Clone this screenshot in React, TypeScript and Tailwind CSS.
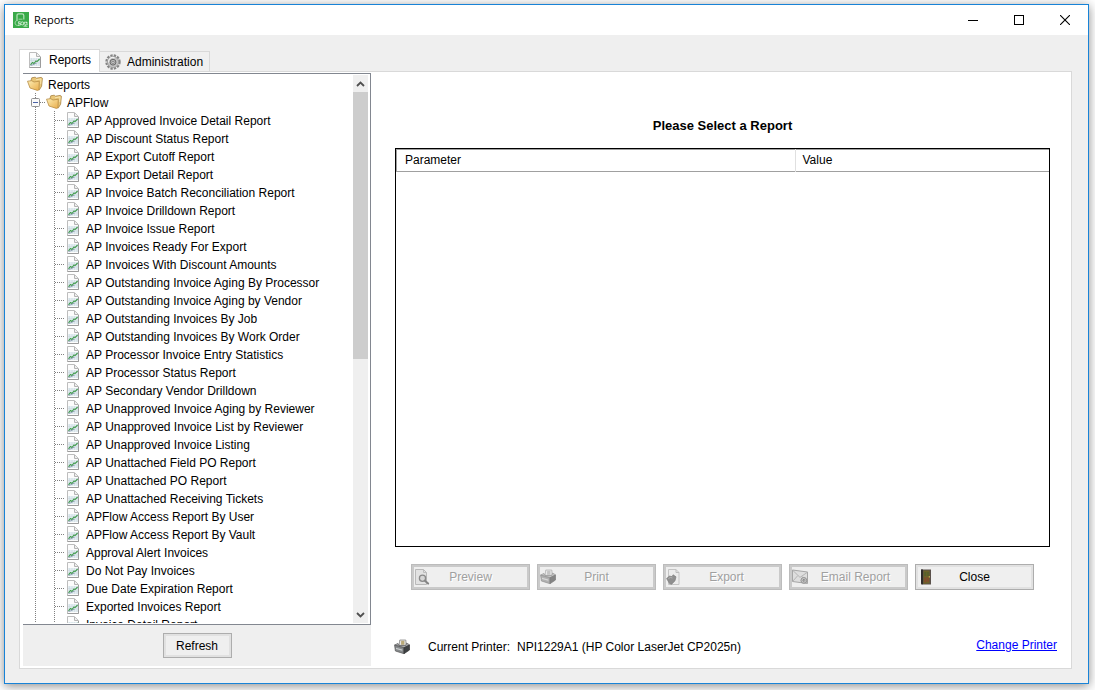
import React, { useRef, useState } from 'react';
import clsx from 'clsx';

const REPORTS = [
  'AP Approved Invoice Detail Report',
  'AP Discount Status Report',
  'AP Export Cutoff Report',
  'AP Export Detail Report',
  'AP Invoice Batch Reconciliation Report',
  'AP Invoice Drilldown Report',
  'AP Invoice Issue Report',
  'AP Invoices Ready For Export',
  'AP Invoices With Discount Amounts',
  'AP Outstanding Invoice Aging By Processor',
  'AP Outstanding Invoice Aging by Vendor',
  'AP Outstanding Invoices By Job',
  'AP Outstanding Invoices By Work Order',
  'AP Processor Invoice Entry Statistics',
  'AP Processor Status Report',
  'AP Secondary Vendor Drilldown',
  'AP Unapproved Invoice Aging by Reviewer',
  'AP Unapproved Invoice List by Reviewer',
  'AP Unapproved Invoice Listing',
  'AP Unattached Field PO Report',
  'AP Unattached PO Report',
  'AP Unattached Receiving Tickets',
  'APFlow Access Report By User',
  'APFlow Access Report By Vault',
  'Approval Alert Invoices',
  'Do Not Pay Invoices',
  'Due Date Expiration Report',
  'Exported Invoices Report',
  'Invoice Detail Report',
];

// Dotted guide lines of the tree
const V_DOTS = 'bg-[repeating-linear-gradient(to_bottom,#808080_0_1px,transparent_1px_2px)]';
const H_DOTS = 'bg-[repeating-linear-gradient(to_right,#808080_0_1px,transparent_1px_2px)]';

const AppIcon = () => (
  <svg width="16" height="16" viewBox="0 0 16 16" className="shrink-0" fill="none">
    <rect width="16" height="16" fill="#3aaa49" />
    <path d="M4 9V3.5Q4 1.8 5.7 1.8H9Q10.8 1.8 10.8 3.5V7.5" stroke="#b7e3bb" strokeWidth="1.2" />
    <path d="M4 8.5Q2 8.8 2 11T4.2 13.4H6M5.5 7.2h4" stroke="#9bd7a1" strokeWidth="1" />
    <path d="M7.6 9.8H5.4v1.6h2v1.7H5" stroke="#d6f0d8" strokeWidth=".9" />
    <circle cx="9.3" cy="11.4" r="1.5" stroke="#d6f0d8" strokeWidth=".9" />
    <circle cx="12.6" cy="11.6" r="1.5" stroke="#d6f0d8" strokeWidth="1.4" strokeDasharray="1.2 .5" />
    <path d="M10.5 14.2h4" stroke="#b7e3bb" />
  </svg>
);

const ReportIcon = () => (
  <svg width="16" height="16" viewBox="0 0 16 16" className="shrink-0" fill="none">
    <path d="M2.5.5h7l4 4v11h-11z" fill="#fcfcfc" stroke="#bdbdbd" />
    <path d="M9.5 1v3.5H13" fill="#eee" stroke="#b4b4b4" />
    <path d="M2.5 15.5h11V5" stroke="#9c9c9c" />
    <path d="M3 6h10v8H3z" fill="#e4edf1" />
    <path d="M4.5 6v8M7 6v8M9.5 6v8M12 6v8M3 8.5h10M3 11h10" stroke="#c6d5dc" strokeWidth=".5" />
    <path d="M3.5 12.8l2-2.3 1.5 1 2-2.6 1 .7L12.6 7" stroke="#3f9a4a" strokeWidth="1.1" />
    <path d="M3.5 13.4l2.5-.6 2-1.2 1.5-.2" stroke="#7688a4" strokeWidth=".7" />
  </svg>
);

const FolderIcon = () => (
  <svg width="16" height="16" viewBox="0 0 16 16" className="shrink-0">
    <defs>
      <linearGradient id="folder" x1="0" y1="0" x2="1" y2="1">
        <stop offset="0" stopColor="#fdeeb4" />
        <stop offset="1" stopColor="#e9ad4b" />
      </linearGradient>
    </defs>
    <path d="M4 4.5l.8-2.7 3.4-.6 1.2 1 4.8-.8 1.2.8-.8 8-2.2 3.6L6 12z" fill="#e9c677" stroke="#a88343" strokeWidth=".8" />
    <path d="M9 3.8l5-.9-.3 5" fill="none" stroke="#fbe8b2" strokeWidth=".9" />
    <path d="M.5 5.2l4.2-.5L7 6l5.3-.8-.3 8.6-1.6.6L3 12z" fill="url(#folder)" stroke="#b78d45" strokeWidth=".8" />
  </svg>
);

const GearIcon = () => (
  <svg width="16" height="16" viewBox="0 0 16 16" className="shrink-0" fill="none">
    <circle cx="8" cy="8" r="6.5" stroke="#858585" strokeWidth="2.4" strokeDasharray="2.3 1.1" />
    <circle cx="8" cy="8" r="5.6" fill="#c2c2c2" stroke="#9a9a9a" strokeWidth=".8" />
    <path d="M3.6 8.5A4.2 4.2 0 0 1 9.5 3.9" stroke="#f2f2f2" strokeWidth="1.2" />
    <circle cx="8" cy="8.2" r="2.9" fill="#b8b8b8" stroke="#6a6a6a" strokeWidth="1" />
    <circle cx="8" cy="8.4" r="1.1" fill="#efefef" stroke="#666" strokeWidth=".7" />
  </svg>
);

const PrinterIcon = () => (
  <svg width="16" height="16" viewBox="0 0 16 16" className="shrink-0">
    <path d="M5 6.5L5.8 1h6l.5 5.5z" fill="#e6e6e6" stroke="#888" strokeWidth=".8" />
    <path d="M7.2 1.8h3.2v4H7z" fill="#b9a978" />
    <path d="M.6 6L4 4.4l.8 2h7L12.6 4l2.9 1.8-5.5 3z" fill="#a5a8aa" stroke="#5d5d5d" strokeWidth=".7" />
    <path d="M.6 6.2L10 8.8v5.9L1.4 12z" fill="#85898b" stroke="#555" strokeWidth=".7" />
    <path d="M10 8.8l5.5-2.8v5L10 14.7z" fill="#3d4143" stroke="#333" strokeWidth=".7" />
    <path d="M2 8.8l6.3 1.8v1.2L2 10z" fill="#c9cbcc" />
  </svg>
);

const PreviewIcon = () => (
  <svg width="16" height="16" viewBox="0 0 16 16" className="shrink-0" fill="none">
    <path d="M1.5.5h8l3 3v12h-11z" fill="#e2e2e2" stroke="#b9b9b9" />
    <path d="M9.5.5v3h3" stroke="#bdbdbd" />
    <circle cx="8.5" cy="9.3" r="3.1" fill="#d6d6d6" stroke="#8a8a8a" strokeWidth="1.3" />
    <path d="M10.9 11.8l3.2 2.8" stroke="#858585" strokeWidth="2" strokeLinecap="round" />
  </svg>
);

const ExportIcon = () => (
  <svg width="16" height="16" viewBox="0 0 16 16" className="shrink-0">
    <path d="M2.5.5h7.5l3 3v12H2.5z" fill="#ececec" stroke="#c4c4c4" />
    <path d="M10 .5v3h3" fill="none" stroke="#bcbcbc" />
    <path d="M.6 9.5l3-2.4 2.6.6L7 5.8l3 2-1 4-3.4 3.4-2-.6z" fill="#8f8f8f" stroke="#7c7c7c" strokeWidth=".7" />
    <path d="M2.4 9.6l2-1.2 2 .6" fill="none" stroke="#bbb" strokeWidth=".8" />
  </svg>
);

const EmailIcon = () => (
  <svg width="16" height="16" viewBox="0 0 16 16" className="shrink-0" fill="none">
    <path d="M.5 1l15 2v11.5L.5 12.5z" fill="#dedede" stroke="#a6a6a6" />
    <path d="M.8 1.4L8 8.4l7.2-5M.8 12.2l5-5.6M15 14L10 7.4" stroke="#b0b0b0" strokeWidth=".9" />
    <circle cx="11.8" cy="11.4" r="2.9" fill="#c6c6c6" stroke="#929292" />
    <path d="M10.5 11.6l1.3-1.5 1.3 1.5M11.8 10.3v2.8" stroke="#858585" strokeWidth=".9" />
  </svg>
);

const DoorIcon = () => (
  <svg width="16" height="16" viewBox="0 0 16 16" className="shrink-0">
    <path d="M3 .5h10v15H3z" fill="#5a514b" />
    <path d="M3 .5h2v15l-2-1z" fill="#2f2b2a" />
    <path d="M5.4 1.5h6.2v12.7l-6.2.8z" fill="#6d6229" />
    <path d="M6.4 3h1.9v4H6.4zM9.2 3h1.6v4H9.2z" fill="#55602b" />
    <path d="M6.4 8.6h1.9v4.6H6.4zM9.2 8.6h1.6v4.2H9.2z" fill="#87482e" />
    <rect x="10.8" y="7.2" width="1" height="1.3" fill="#e0c25a" />
  </svg>
);

interface ActionButtonProps {
  label: string;
  icon: React.ReactNode;
  labelClass?: string;
  disabled?: boolean;
  onClick?: () => void;
}

const ActionButton: React.FC<ActionButtonProps> = ({ label, icon, labelClass = 'pr-4', disabled, onClick }) => (
  <button
    type="button"
    disabled={disabled}
    onClick={onClick}
    className={clsx(
      'flex h-[26px] w-[119px] items-center border bg-[#efefef] px-0.5',
      disabled
        ? 'border-[#bcbcbc] text-[#a0a0a0] shadow-[inset_0_0_0_2px_#cacaca] [text-shadow:1px_1px_0_#fff]'
        : 'border-[#adadad] text-black shadow-[inset_0_0_0_2px_#e1e1e1]'
    )}
  >
    {icon}
    <span className={clsx('flex-1 text-center', labelClass)}>{label}</span>
  </button>
);

export default function App() {
  const [tab, setTab] = useState('reports');
  const treeRef = useRef<HTMLDivElement>(null);

  const scrollTree = (delta: number) => {
    treeRef.current?.scrollBy({ top: delta });
  };

  return (
    <div className="h-screen bg-white pt-1 pr-1.5 pb-1.5 pl-1 font-['Liberation_Sans',Arial,sans-serif] text-[12px] leading-4 text-black">
      <div className="flex h-full flex-col border border-[#1883d7] bg-[#efefef] shadow-[0_2px_10px_rgba(0,0,0,0.45)]">

        {/* Title bar */}
        <header className="flex h-[30px] shrink-0 items-center bg-white pl-2">
          <AppIcon />
          <h1 className="flex-1 pl-[5px] font-['Open_Sans','Noto_Sans',sans-serif] text-[11px]">Reports</h1>
          <button type="button" aria-label="Minimize" className="flex h-full w-[46px] items-center justify-center">
            <svg width="10" height="10" shapeRendering="crispEdges"><path d="M0 5.5h10" stroke="#000" /></svg>
          </button>
          <button type="button" aria-label="Maximize" className="flex h-full w-[46px] items-center justify-center">
            <svg width="10" height="10" fill="none"><rect x=".5" y=".5" width="9" height="9" stroke="#000" /></svg>
          </button>
          <button type="button" aria-label="Close window" className="flex h-full w-[46px] items-center justify-center">
            <svg width="10" height="10"><path d="M0 0l10 10M10 0L0 10" stroke="#000" strokeWidth="1.1" /></svg>
          </button>
        </header>

        <div className="flex min-h-0 flex-1 flex-col pt-3.5 pr-4 pb-3.5 pl-3.5">
          {/* Tabs, the selected one runs into the panel below */}
          <div role="tablist" className="z-10 -mb-px flex items-end">
            <button
              type="button"
              role="tab"
              aria-selected={tab === 'reports'}
              onClick={() => setTab('reports')}
              className="flex h-[23px] items-center gap-1.5 border border-b-0 border-[#d9d9d9] bg-white pr-2 pb-0.5 pl-[7px]"
            >
              <ReportIcon /> Reports
            </button>
            <button
              type="button"
              role="tab"
              aria-selected={tab === 'admin'}
              onClick={() => setTab('admin')}
              className="flex h-[21px] items-center gap-1.5 border border-l-0 border-[#d9d9d9] bg-[#f0f0f0] pr-1.5 pl-[5px]"
            >
              <GearIcon /> Administration
            </button>
          </div>

          <div className="flex min-h-0 flex-1 border border-[#d9d9d9] bg-white pt-px pb-0.5 pl-[3px]">

            {/* Report tree */}
            <aside className="flex w-[348px] shrink-0 flex-col bg-[#efefef]">
              <div className="flex min-h-0 flex-1 border-y border-r border-[#828790] bg-white py-px pr-px">
                <div ref={treeRef} className="min-w-0 flex-1 overflow-y-auto [scrollbar-width:none]">
                  <ul role="tree" aria-label="Reports">
                    <li className="flex h-[18px] items-center pl-1">
                      <FolderIcon />
                      <span className="pt-0.5 pl-[5px]">Reports</span>
                    </li>
                    <li className="flex h-[18px] items-center pl-2">
                      <span className="flex h-full w-[9px] flex-col items-center">
                        <span className={clsx('h-[5px] w-px', V_DOTS)} />
                        <svg width="9" height="9" fill="none" className="shrink-0">
                          <rect x=".5" y=".5" width="8" height="8" rx="1" fill="#fafafa" stroke="#919191" />
                          <path d="M2 4.5h5" stroke="#4b63a7" />
                        </svg>
                        <span className={clsx('w-px flex-1', V_DOTS)} />
                      </span>
                      <span className={clsx('mr-px h-px w-[5px]', H_DOTS)} />
                      <FolderIcon />
                      <span className="pt-0.5 pl-[5px]">APFlow</span>
                    </li>
                    {REPORTS.map((name) => (
                      <li key={name} className="flex h-[18px] items-center pl-3">
                        <span className={clsx('mr-[18px] h-full w-px shrink-0', V_DOTS)} />
                        <span className={clsx('h-full w-px shrink-0', V_DOTS)} />
                        <span className={clsx('h-px w-[10px] shrink-0', H_DOTS)} />
                        <ReportIcon />
                        <span className="pt-0.5 pl-[5px] whitespace-nowrap">{name}</span>
                      </li>
                    ))}
                  </ul>
                </div>
                <div className="mr-px flex w-[15px] flex-col bg-[#efefef]">
                  <button type="button" aria-label="Scroll up" onClick={() => scrollTree(-18)} className="flex h-[17px] items-center justify-center">
                    <svg width="9" height="6" fill="none"><path d="M1 5l3.5-3.5L8 5" stroke="#505050" strokeWidth="1.8" /></svg>
                  </button>
                  <div className="min-h-0 flex-1">
                    <div className="h-[52%] bg-[#cdcdcd]" />
                  </div>
                  <button type="button" aria-label="Scroll down" onClick={() => scrollTree(18)} className="flex h-[17px] items-center justify-center">
                    <svg width="9" height="6" fill="none"><path d="M1 1l3.5 3.5L8 1" stroke="#505050" strokeWidth="1.8" /></svg>
                  </button>
                </div>
              </div>
              <div className="flex justify-center py-2">
                <button type="button" className="h-[25px] w-[69px] border border-[#adadad] bg-[#efefef] shadow-[inset_0_0_0_2px_#e1e1e1]">
                  Refresh
                </button>
              </div>
            </aside>

            {/* Selected report */}
            <main className="flex min-w-0 flex-1 flex-col">
              <h2 className="pt-[43px] pr-[21px] pb-3 pl-6 text-center text-[13px] leading-5 font-bold">Please Select a Report</h2>
              <div className="mr-[21px] ml-6 min-h-0 flex-1 border border-black">
                <table className="w-full table-fixed border-collapse text-left">
                  <thead>
                    <tr className="h-[22px] border-b border-[#a0a0a0] shadow-[inset_1px_1px_0_#a0a0a0]">
                      <th className="w-[399px] border-r border-[#e0e0e0] px-[9px] pt-px font-normal">Parameter</th>
                      <th className="px-[7px] pt-px font-normal">Value</th>
                    </tr>
                  </thead>
                  <tbody />
                </table>
              </div>

              <div className="flex justify-center gap-[7px] pt-[17px] pr-[21px] pl-6">
                <ActionButton label="Preview" icon={<PreviewIcon />} disabled />
                <ActionButton label="Print" icon={<span className="opacity-60 grayscale"><PrinterIcon /></span>} disabled />
                <ActionButton label="Export" icon={<ExportIcon />} labelClass="pr-2" disabled />
                <ActionButton label="Email Report" icon={<EmailIcon />} labelClass="pr-0.5" disabled />
                <ActionButton label="Close" icon={<DoorIcon />} />
              </div>

              <footer className="flex items-start pt-[47px] pr-3.5 pb-[11px] pl-[23px]">
                <div className="flex flex-1 items-center pt-0.5">
                  <PrinterIcon />
                  <span className="pl-[18px]">Current Printer:</span>
                  <span className="pl-[7px]">NPI1229A1 (HP Color LaserJet CP2025n)</span>
                </div>
                <a href="#printer" className="text-[#0000ff] underline">Change Printer</a>
              </footer>
            </main>
          </div>
        </div>
      </div>
    </div>
  );
}
